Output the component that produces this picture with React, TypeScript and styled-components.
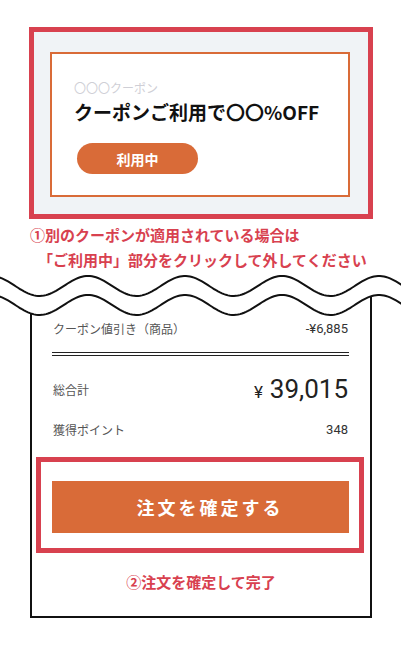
import styled, { createGlobalStyle } from 'styled-components'

const GlobalStyle = createGlobalStyle`
  html, body {
    margin: 0;
    padding: 0;
    background: #ffffff;
  }
  body {
    font-family: "Noto Sans CJK JP", "Noto Sans", sans-serif;
    color: #222;
  }
`

const RED = '#d8414f'
const ORANGE = '#d96b38'

// sine wave, crest every 97px
const wavePoints = (center: number) => {
  const pts: string[] = []
  for (let x = -4; x <= 405; x += 2) {
    const y = center - 10 * Math.cos((2 * Math.PI * (x + 9)) / 97)
    pts.push(`${x},${y.toFixed(2)}`)
  }
  return pts
}

const Wave = () => {
  const top = wavePoints(18)
  const bottom = wavePoints(37)
  const fill = `M-4,0 L405,0 L${[...bottom].reverse().join(' L')} Z`
  return (
    <WaveSvg width="401" height="54" viewBox="0 0 401 54">
      <path d={fill} fill="#ffffff" />
      <polyline points={top.join(' ')} fill="none" stroke="#111" strokeWidth="2" />
      <polyline points={bottom.join(' ')} fill="none" stroke="#111" strokeWidth="2" />
    </WaveSvg>
  )
}

export default function App() {
  return (
    <>
      <GlobalStyle />
      <Page>
        <CouponHighlight>
          <CouponCard>
            <CouponName>〇〇〇クーポン</CouponName>
            <CouponTitle>クーポンご利用で〇〇%OFF</CouponTitle>
            <UseButton>利用中</UseButton>
          </CouponCard>
        </CouponHighlight>

        <Note>
          <NoteLine>①別のクーポンが適用されている場合は</NoteLine>
          <NoteLine indent>「ご利用中」部分をクリックして外してください</NoteLine>
        </Note>

        <Receipt>
          <Wave />
          <Box>
            <Row>
              <Label>クーポン値引き（商品）</Label>
              <Value>-¥6,885</Value>
            </Row>
            <DoubleRule />
            <Row total>
              <Label>総合計</Label>
              <Total>
                <Yen>¥</Yen>39,015
              </Total>
            </Row>
            <Row points>
              <Label>獲得ポイント</Label>
              <Value>348</Value>
            </Row>
            <ConfirmHighlight>
              <ConfirmButton>注文を確定する</ConfirmButton>
            </ConfirmHighlight>
            <DoneNote>②注文を確定して完了</DoneNote>
          </Box>
        </Receipt>
      </Page>
    </>
  )
}

const Page = styled.div`
  width: 401px;
  padding-top: 27px;
`

const CouponHighlight = styled.div`
  margin-left: 29px;
  width: 344px;
  height: 192px;
  box-sizing: border-box;
  border: 5px solid ${RED};
  background: #f0f3f6;
  padding: 20px 18px 17px 16px;
`

const CouponCard = styled.div`
  height: 145px;
  box-sizing: border-box;
  border: 2px solid ${ORANGE};
  background: #fff;
  padding: 26px 20px 0 22px;
`

const CouponName = styled.div`
  font-size: 12px;
  line-height: 16px;
  color: #cfcfd6;
`

const CouponTitle = styled.div`
  margin-top: 3px;
  font-size: 19px;
  line-height: 26px;
  font-weight: 700;
  color: #111;
`

const UseButton = styled.div`
  margin: 18px 0 0 3px;
  width: 121px;
  height: 31px;
  border-radius: 16px;
  background: ${ORANGE};
  color: #fff;
  font-size: 14px;
  font-weight: 700;
  display: flex;
  align-items: center;
  justify-content: center;
`

const Note = styled.div`
  margin-top: 3px;
  padding-left: 30px;
  color: ${RED};
  font-size: 15px;
  font-weight: 700;
  line-height: 25px;
`

const NoteLine = styled.div<{ indent?: boolean }>`
  white-space: nowrap;
  padding-left: ${(p) => (p.indent ? '8px' : '0')};
`

const Receipt = styled.div`
  position: relative;
`

const WaveSvg = styled.svg`
  position: absolute;
  top: -4px;
  left: 0;
  display: block;
`

const Box = styled.div`
  margin-left: 30px;
  width: 342px;
  box-sizing: border-box;
  border: 2px solid #111;
  border-top: none;
  padding: 46px 0 23px;
`

const Row = styled.div<{ total?: boolean; points?: boolean }>`
  display: flex;
  justify-content: space-between;
  align-items: center;
  margin: ${(p) => (p.total ? '18px' : p.points ? '15px' : '0')} 22px 0 21px;
  height: ${(p) => (p.total ? '30px' : '20px')};
`

const Label = styled.span`
  font-size: 12px;
  color: #555;
`

const Value = styled.span`
  font-family: Roboto, "Noto Sans CJK JP", sans-serif;
  font-size: 13px;
  color: #333;
`

const Total = styled.span`
  font-family: Roboto, "Noto Sans CJK JP", sans-serif;
  font-size: 26px;
  color: #222;
  display: flex;
  align-items: baseline;
`

const Yen = styled.span`
  font-size: 17px;
  margin-right: 7px;
`

const DoubleRule = styled.div`
  margin: 14px 21px 0 20px;
  height: 2px;
  border-top: 1px solid #222;
  border-bottom: 1px solid #222;
`

const ConfirmHighlight = styled.div`
  margin: 18px 6px 0 4px;
  height: 96px;
  box-sizing: border-box;
  border: 5px solid ${RED};
  padding: 19px 10px 0 11px;
`

const ConfirmButton = styled.div`
  height: 52px;
  background: ${ORANGE};
  color: #fff;
  font-size: 18px;
  font-weight: 700;
  letter-spacing: 3px;
  padding-left: 19px;
  display: flex;
  align-items: center;
  justify-content: center;
`

const DoneNote = styled.div`
  margin-top: 18px;
  line-height: 22px;
  text-align: center;
  color: ${RED};
  font-size: 15px;
  font-weight: 700;
`
